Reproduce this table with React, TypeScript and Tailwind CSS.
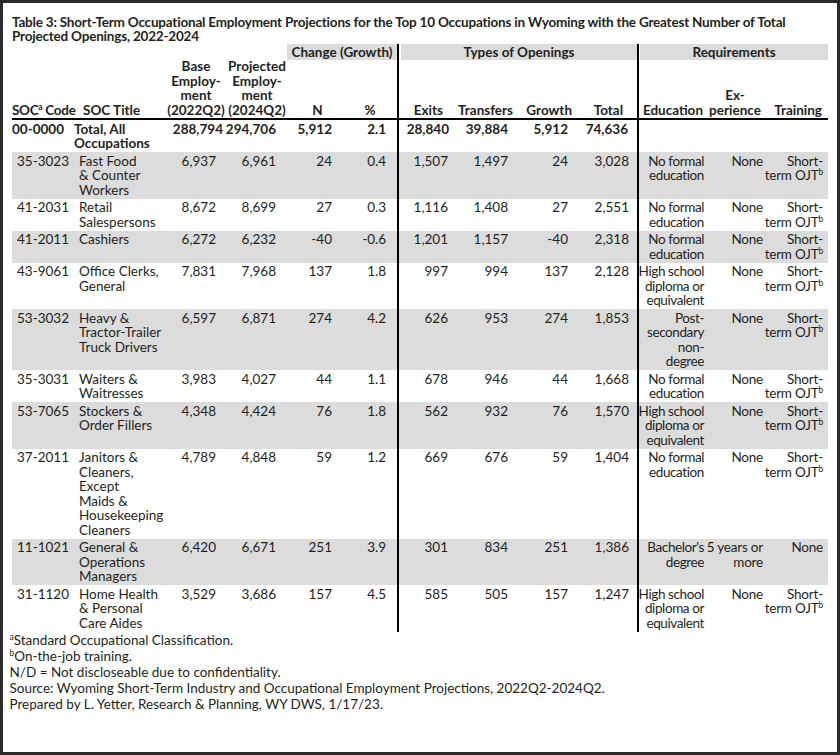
import React from 'react';

type Row = {
  code: string;
  title: string[];
  base: string;
  proj: string;
  n: string;
  pct: string;
  exits: string;
  transfers: string;
  growth: string;
  total: string;
  edu: string[];
  exp: string[];
  train: 'ojt' | 'none';
};

const NOFORMAL = ['No formal', 'education'];
const HIGHSCHOOL = ['High school', 'diploma or', 'equivalent'];

const rows: Row[] = [
  { code: '35-3023', title: ['Fast Food', '& Counter', 'Workers'], base: '6,937', proj: '6,961', n: '24', pct: '0.4', exits: '1,507', transfers: '1,497', growth: '24', total: '3,028', edu: NOFORMAL, exp: ['None'], train: 'ojt' },
  { code: '41-2031', title: ['Retail', 'Salespersons'], base: '8,672', proj: '8,699', n: '27', pct: '0.3', exits: '1,116', transfers: '1,408', growth: '27', total: '2,551', edu: NOFORMAL, exp: ['None'], train: 'ojt' },
  { code: '41-2011', title: ['Cashiers'], base: '6,272', proj: '6,232', n: '-40', pct: '-0.6', exits: '1,201', transfers: '1,157', growth: '-40', total: '2,318', edu: NOFORMAL, exp: ['None'], train: 'ojt' },
  { code: '43-9061', title: ['Office Clerks,', 'General'], base: '7,831', proj: '7,968', n: '137', pct: '1.8', exits: '997', transfers: '994', growth: '137', total: '2,128', edu: HIGHSCHOOL, exp: ['None'], train: 'ojt' },
  { code: '53-3032', title: ['Heavy &', 'Tractor-Trailer', 'Truck Drivers'], base: '6,597', proj: '6,871', n: '274', pct: '4.2', exits: '626', transfers: '953', growth: '274', total: '1,853', edu: ['Post-', 'secondary', 'non-', 'degree'], exp: ['None'], train: 'ojt' },
  { code: '35-3031', title: ['Waiters &', 'Waitresses'], base: '3,983', proj: '4,027', n: '44', pct: '1.1', exits: '678', transfers: '946', growth: '44', total: '1,668', edu: NOFORMAL, exp: ['None'], train: 'ojt' },
  { code: '53-7065', title: ['Stockers &', 'Order Fillers'], base: '4,348', proj: '4,424', n: '76', pct: '1.8', exits: '562', transfers: '932', growth: '76', total: '1,570', edu: HIGHSCHOOL, exp: ['None'], train: 'ojt' },
  { code: '37-2011', title: ['Janitors &', 'Cleaners,', 'Except', 'Maids &', 'Housekeeping', 'Cleaners'], base: '4,789', proj: '4,848', n: '59', pct: '1.2', exits: '669', transfers: '676', growth: '59', total: '1,404', edu: NOFORMAL, exp: ['None'], train: 'ojt' },
  { code: '11-1021', title: ['General &', 'Operations', 'Managers'], base: '6,420', proj: '6,671', n: '251', pct: '3.9', exits: '301', transfers: '834', growth: '251', total: '1,386', edu: ["Bachelor's", 'degree'], exp: ['5 years or', 'more'], train: 'none' },
  { code: '31-1120', title: ['Home Health', '& Personal', 'Care Aides'], base: '3,529', proj: '3,686', n: '157', pct: '4.5', exits: '585', transfers: '505', growth: '157', total: '1,247', edu: HIGHSCHOOL, exp: ['None'], train: 'ojt' },
];

function Lines({ lines }: { lines: React.ReactNode[] }) {
  return (
    <>
      {lines.map((l, i) => (
        <div key={i} className="whitespace-nowrap">{l}</div>
      ))}
    </>
  );
}

function Sup({ children }: { children: React.ReactNode }) {
  return <span className="relative -top-[5px] text-[8.5px] leading-none">{children}</span>;
}

export default function App() {
  return (
    <div
      className="w-[840px] h-[755px] bg-white border-[3px] border-[#2b2b2b] text-[#231f20] overflow-hidden"
      style={{ fontFamily: 'Lato, "Noto Sans", sans-serif' }}
    >
      <div className="pl-[9px] pt-[12px]">
        <h1 className="font-bold text-[13.5px] leading-[14px] tracking-[-0.2px] whitespace-nowrap">
          Table 3: Short-Term Occupational Employment Projections for the Top 10 Occupations in Wyoming with the Greatest Number of Total
          <br />
          Projected Openings, 2022-2024
        </h1>

        <div className="w-[816px] mt-[1px] text-[13.5px] leading-[14.5px]">
          {/* group band row */}
          <div className="flex h-[16px] font-bold">
            <div className="w-[275px]" />
            <div className="w-[110px] bg-[#dcdcdc] flex justify-center leading-[16px]">Change (Growth)</div>
            <div className="w-[2px] bg-black" />
            <div className="w-[2px]" />
            <div className="w-[236px] bg-[#dcdcdc] flex justify-center leading-[16px]">Types of Openings</div>
            <div className="w-[2px] bg-black" />
            <div className="w-[1px]" />
            <div className="w-[188px] bg-[#dcdcdc] flex justify-center leading-[16px]">Requirements</div>
          </div>

          {/* column headers */}
          <div className="flex font-bold border-b-2 border-black h-[60px]">
            <div className="w-[62px] flex flex-col justify-end pb-[1px] tracking-[-0.3px]">
              <div className="whitespace-nowrap">SOC<Sup>a</Sup> Code</div>
            </div>
            <div className="w-[91px] flex flex-col justify-end pl-[9px] pb-[1px]">
              <div className="whitespace-nowrap">SOC Title</div>
            </div>
            <div className="w-[65px] flex flex-col justify-end items-center pr-[3px] pb-[1px]">
              <Lines lines={['Base', 'Employ-', 'ment', '(2022Q2)']} />
            </div>
            <div className="w-[57px] flex flex-col justify-end items-center pr-[3px] pb-[1px]">
              <Lines lines={['Projected', 'Employ-', 'ment', '(2024Q2)']} />
            </div>
            <div className="w-[53px] flex flex-col justify-end items-center pl-[8px] pb-[1px]">N</div>
            <div className="w-[57px] flex flex-col justify-end items-center pl-[3px] pb-[1px]">%</div>
            <div className="w-[58px] border-l-2 border-black flex flex-col justify-end items-end pr-[12px] pb-[1px]">Exits</div>
            <div className="w-[60px] flex flex-col justify-end items-end pr-[2px] pb-[1px]">Transfers</div>
            <div className="w-[60px] flex flex-col justify-end items-end pr-[3px] pb-[1px]">Growth</div>
            <div className="w-[62px] flex flex-col justify-end items-end pr-[14px] pb-[1px]">Total</div>
            <div className="w-[71px] border-l-2 border-black flex flex-col justify-end items-end pr-[5px] pb-[1px]">Education</div>
            <div className="w-[59px] flex flex-col justify-end items-center pr-[5px] pb-[1px]">
              <Lines lines={['Ex-', 'perience']} />
            </div>
            <div className="w-[61px] flex flex-col justify-end items-end pr-[6px] pb-[1px]">Training</div>
          </div>

          {/* total row */}
          <div className="flex font-bold">
            <div className="w-[62px] py-[1.5px]">00-0000</div>
            <div className="w-[91px] py-[1.5px]"><Lines lines={['Total, All', 'Occupations']} /></div>
            <div className="w-[65px] py-[1.5px] flex flex-col items-end pr-[7px]">288,794</div>
            <div className="w-[57px] py-[1.5px] flex flex-col items-end pr-[11px]">294,706</div>
            <div className="w-[53px] py-[1.5px] flex flex-col items-end pr-[8px]">5,912</div>
            <div className="w-[57px] py-[1.5px] flex flex-col items-end pr-[11px]">2.1</div>
            <div className="w-[58px] py-[1.5px] border-l-2 border-black flex flex-col items-end pr-[6px]">28,840</div>
            <div className="w-[60px] py-[1.5px] flex flex-col items-end pr-[7px]">39,884</div>
            <div className="w-[60px] py-[1.5px] flex flex-col items-end pr-[7px]">5,912</div>
            <div className="w-[62px] py-[1.5px] flex flex-col items-end pr-[9px]">74,636</div>
            <div className="w-[71px] border-l-2 border-black" />
            <div className="w-[59px]" />
            <div className="w-[61px]" />
          </div>

          {rows.map((r, i) => (
            <div key={r.code} className={`flex ${i % 2 === 0 ? 'bg-[#dcdcdc]' : 'bg-white'}`}>
              <div className="w-[62px] py-[1.5px] pl-[5px]">{r.code}</div>
              <div className="w-[91px] py-[1.5px] pl-[5px]"><Lines lines={r.title} /></div>
              <div className="w-[65px] py-[1.5px] flex flex-col items-end pr-[14px]">{r.base}</div>
              <div className="w-[57px] py-[1.5px] flex flex-col items-end pr-[11px]">{r.proj}</div>
              <div className="w-[53px] py-[1.5px] flex flex-col items-end pr-[8px]">{r.n}</div>
              <div className="w-[57px] py-[1.5px] flex flex-col items-end pr-[11px]">{r.pct}</div>
              <div className="w-[58px] py-[1.5px] border-l-2 border-black flex flex-col items-end pr-[7px]">{r.exits}</div>
              <div className="w-[60px] py-[1.5px] flex flex-col items-end pr-[7px]">{r.transfers}</div>
              <div className="w-[60px] py-[1.5px] flex flex-col items-end pr-[7px]">{r.growth}</div>
              <div className="w-[62px] py-[1.5px] flex flex-col items-end pr-[8px]">{r.total}</div>
              <div className="w-[71px] py-[1.5px] border-l-2 border-black flex flex-col items-end pr-[4px] tracking-[-0.4px]"><Lines lines={r.edu} /></div>
              <div className="w-[59px] py-[1.5px] flex flex-col items-end pr-[4px] tracking-[-0.2px]"><Lines lines={r.exp} /></div>
              <div className="w-[61px] py-[1.5px] flex flex-col items-end pr-[5px] tracking-[-0.2px]">
                {r.train === 'ojt' ? (
                  <Lines lines={['Short-', <>term OJT<Sup>b</Sup></>]} />
                ) : (
                  <div>None</div>
                )}
              </div>
            </div>
          ))}
        </div>

        <div className="-ml-[2.5px] text-[13.5px] leading-[16px]">
          <div><Sup>a</Sup>Standard Occupational Classification.</div>
          <div><Sup>b</Sup>On-the-job training.</div>
          <div>N/D = Not discloseable due to confidentiality.</div>
          <div>Source: Wyoming Short-Term Industry and Occupational Employment Projections, 2022Q2-2024Q2.</div>
          <div>Prepared by L. Yetter, Research &amp; Planning, WY DWS, 1/17/23.</div>
        </div>
      </div>
    </div>
  );
}
